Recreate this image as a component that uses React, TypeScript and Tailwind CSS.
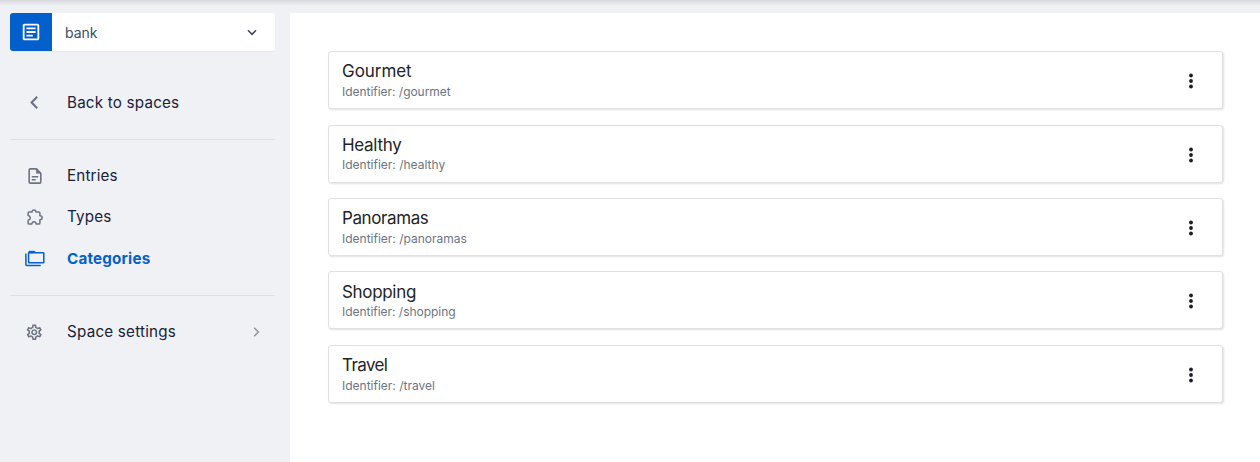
import type { ReactNode } from 'react';
import { MdOutlineArticle, MdOutlineSettings } from 'react-icons/md';

type Category = { name: string; slug: string; nameClass: string; slugClass: string };

const categories: Category[] = [
  { name: 'Gourmet', slug: 'gourmet', nameClass: 'tracking-[-0.05px]', slugClass: 'tracking-[-0.03px]' },
  { name: 'Healthy', slug: 'healthy', nameClass: 'tracking-[-0.3px]', slugClass: 'tracking-[0px]' },
  { name: 'Panoramas', slug: 'panoramas', nameClass: 'tracking-[-0.4px]', slugClass: 'tracking-[0px]' },
  { name: 'Shopping', slug: 'shopping', nameClass: 'tracking-[-0.32px]', slugClass: 'tracking-[-0.03px]' },
  { name: 'Travel', slug: 'travel', nameClass: 'tracking-[-0.6px]', slugClass: 'tracking-[0px]' },
];

function DocumentIcon() {
  return (
    <svg width="14" height="16" viewBox="0 0 14 16" fill="none" stroke="currentColor" strokeWidth="1.6" strokeLinejoin="round">
      <path d="M8.5.9H2.3Q1.2.9 1.2 2v12q0 1.1 1.1 1.1h9.4q1.1 0 1.1-1.1V5.2z" />
      <path d="M8.4 1v4.3h4.3z" fill="currentColor" strokeWidth=".6" />
      <path d="M3.8 8.8h6.4M3.8 11.8h3.9" />
    </svg>
  );
}

function PuzzleIcon() {
  return (
    <svg width="16" height="16" viewBox="0 0 16 16" fill="none" stroke="currentColor" strokeWidth="1.5" strokeLinejoin="round">
      <path d="M2.2 2.9h2.9C5.1 1.6 5.8.9 7 .9s1.9.7 1.9 2h2.9q1.1 0 1.1 1.1v2.8c1.4.1 2.2.8 2.2 2s-.8 1.9-2.2 2V14q0 1.1-1.1 1.1H9.3C9 13.500 8.200 12.700 7 12.700s-2 .8-2.300 2.400H2.200Q1.100 15.100 1.100 14v-2.800c1.400-.3 2.200-1.100 2.200-2.300S2.500 6.900 1.100 6.600V4q0-1.100 1.100-1.100z" />
    </svg>
  );
}

function FoldersIcon() {
  return (
    <svg width="20" height="17" viewBox="0 0 20 17" fill="none" stroke="currentColor" strokeWidth="1.5" strokeLinejoin="round">
      <path d="M4.2 2.8h14q.6 0 .6.6v8.8q0 .6-.6.6h-14q-.6 0-.6-.6V3.4q0-.6.6-.6z" />
      <path d="M3.8 2.6V1.9q0-.6.6-.6h4.9l1.600 1.300z" fill="currentColor" strokeWidth="1" />
      <path d="M.9 3.600v11q0 .8.8.8h14" />
    </svg>
  );
}

function NavItem({ icon, label, active, trailing, track }: {
  icon: ReactNode; label: string; active?: boolean; trailing?: ReactNode; track: string;
}) {
  return (
    <a className={`flex h-[41.4px] items-center pl-[14px] pr-[15px] ${active ? 'text-[#0560cb]' : 'text-[#6c7383]'}`}>
      <span className="flex w-[21px] shrink-0 justify-center">{icon}</span>
      <span className={`ml-[22px] flex-1 text-[15.2px] leading-5 whitespace-nowrap ${track} ${active ? 'font-bold' : 'text-[#17223b]'}`}>{label}</span>
      {trailing}
    </a>
  );
}

export default function App() {
  return (
    <div className="relative flex h-[462px] w-[1260px] overflow-hidden bg-[#f0f1f5] pt-[13px] font-['Inter',sans-serif]">
      <div className="absolute inset-x-0 top-0 h-[6px] bg-linear-to-b from-[#d8d9dd] to-[#f0f1f5]" />
      <aside className="w-[290px] shrink-0 pl-[10px] pr-[15px]">
        <button className="flex h-[38px] w-full items-center overflow-hidden rounded-[3px] bg-white shadow-[0_1px_1px_rgba(0,0,0,0.04)]">
          <span className="flex h-full w-[42px] items-center justify-center bg-[#025fcc] text-white">
            <MdOutlineArticle size={22} />
          </span>
          <span className="ml-[13px] flex-1 text-left text-[14px] tracking-[0px] text-[#404b62]">bank</span>
          <svg className="mr-[18px]" width="10" height="7" viewBox="0 0 10 7" fill="none" stroke="#424b5e" strokeWidth="1.6">
            <path d="m1 1.3 4 4 4-4" />
          </svg>
        </button>
        <div className="mt-[30.9px]">
          <NavItem
            label="Back to spaces"
            track="tracking-[0.2px]"
            icon={
              <svg className="mr-[2px]" width="8" height="13" viewBox="0 0 8 13" fill="none" stroke="currentColor" strokeWidth="2.1">
                <path d="M7.2.8 1.6 6.5l5.6 5.7" />
              </svg>
            }
          />
        </div>
        <hr className="mt-[15.7px] border-[#dfe0e4]" />
        <nav className="mt-[15.2px]">
          <NavItem label="Entries" track="tracking-[0.15px]" icon={<DocumentIcon />} />
          <NavItem label="Types" track="tracking-[0.15px]" icon={<PuzzleIcon />} />
          <NavItem label="Categories" active track="tracking-[0.2px]" icon={<FoldersIcon />} />
        </nav>
        <hr className="mt-[15.600px] border-[#dfe0e4]" />
        <div className="mt-[15.400px]">
          <NavItem
            label="Space settings"
            track="tracking-[0.22px]"
            icon={<MdOutlineSettings size={18.5} />}
            trailing={
              <svg width="7" height="10" viewBox="0 0 7 10" fill="none" stroke="#9498a1" strokeWidth="1.6">
                <path d="m1.2.8 4.2 4.2-4.2 4.2" />
              </svg>
            }
          />
        </div>
      </aside>
      <main className="flex flex-1 flex-col gap-[15.4px] bg-white pt-[38.2px] pr-[37px] pl-[38px]">
        {categories.map((c) => (
          <article key={c.slug} className="flex h-[58px] shrink-0 items-center justify-between rounded-[3px] border border-[#e0e1e5] bg-white pt-px pr-[28px] pl-[13px] shadow-[1px_1px_2px_rgba(0,0,0,0.12)]">
            <div className="pt-[1.8px]">
              <h2 className={`text-[17px] leading-[21.6px] text-[#222428] ${c.nameClass}`}>{c.name}</h2>
              <p className={`text-[12px] leading-[18.8px] text-[#6c7486] ${c.slugClass}`}>Identifier: /{c.slug}</p>
            </div>
            <svg className="mt-px" width="6" height="16" viewBox="0 0 6 16" fill="#1b1d22">
              <circle cx="3" cy="2.5" r="1.9" />
              <circle cx="3" cy="8" r="1.9" />
              <circle cx="3" cy="13.5" r="1.9" />
            </svg>
          </article>
        ))}
      </main>
    </div>
  );
}
